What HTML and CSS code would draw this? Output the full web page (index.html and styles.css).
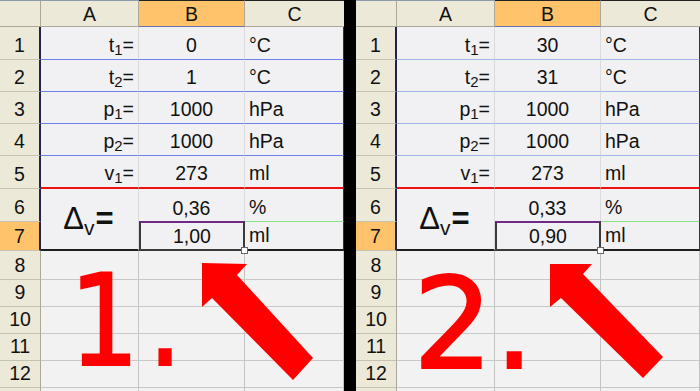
FILE: index.html
```html
<!DOCTYPE html>
<html>
<head>
<meta charset="utf-8">
<link rel="stylesheet" href="styles.css">
</head>
<body>
<div class="page">
  <div class="sheet s1">
    <div class="corner"></div><div class="ch">A</div><div class="ch sel">B</div><div class="ch last">C</div>

    <div class="rh top">1</div><div class="a blue"><span>t<sub>1</sub>=</span></div><div class="b blue">0</div><div class="c blue">°C</div>
    <div class="rh top">2</div><div class="a blue"><span>t<sub>2</sub>=</span></div><div class="b blue">1</div><div class="c blue">°C</div>
    <div class="rh top">3</div><div class="a blue"><span>p<sub>1</sub>=</span></div><div class="b blue">1000</div><div class="c blue">hPa</div>
    <div class="rh top">4</div><div class="a blue"><span>p<sub>2</sub>=</span></div><div class="b blue">1000</div><div class="c blue">hPa</div>
    <div class="rh top">5</div><div class="a red"><span>v<sub>1</sub>=</span></div><div class="b red">273</div><div class="c red">ml</div>
    <div class="rh top">6</div><div class="delta"><span>Δ<sub>v</sub><b>=</b></span></div><div class="b r6">0,36</div><div class="c green">%</div>
    <div class="rh top sel">7</div><div class="box">1,00<span class="handle"></span></div><div class="c r7">ml</div>

    <div class="rh">8</div><div class="e"></div><div class="e"></div><div class="e"></div>
    <div class="rh">9</div><div class="e"></div><div class="e"></div><div class="e"></div>
    <div class="rh">10</div><div class="e"></div><div class="e"></div><div class="e"></div>
    <div class="rh">11</div><div class="e"></div><div class="e"></div><div class="e"></div>
    <div class="rh">12</div><div class="e"></div><div class="e"></div><div class="e"></div>
    <div class="rh"></div><div class="e"></div><div class="e"></div><div class="e"></div>
  </div>

  <div class="sheet s2">
    <div class="corner"></div><div class="ch">A</div><div class="ch sel">B</div><div class="ch last">C</div>

    <div class="rh top">1</div><div class="a blue"><span>t<sub>1</sub>=</span></div><div class="b blue">30</div><div class="c blue">°C</div>
    <div class="rh top">2</div><div class="a blue"><span>t<sub>2</sub>=</span></div><div class="b blue">31</div><div class="c blue">°C</div>
    <div class="rh top">3</div><div class="a blue"><span>p<sub>1</sub>=</span></div><div class="b blue">1000</div><div class="c blue">hPa</div>
    <div class="rh top">4</div><div class="a blue"><span>p<sub>2</sub>=</span></div><div class="b blue">1000</div><div class="c blue">hPa</div>
    <div class="rh top">5</div><div class="a red"><span>v<sub>1</sub>=</span></div><div class="b red">273</div><div class="c red">ml</div>
    <div class="rh top">6</div><div class="delta"><span>Δ<sub>v</sub><b>=</b></span></div><div class="b r6">0,33</div><div class="c green">%</div>
    <div class="rh top sel">7</div><div class="box">0,90<span class="handle"></span></div><div class="c r7">ml</div>

    <div class="rh">8</div><div class="e"></div><div class="e"></div><div class="e"></div>
    <div class="rh">9</div><div class="e"></div><div class="e"></div><div class="e"></div>
    <div class="rh">10</div><div class="e"></div><div class="e"></div><div class="e"></div>
    <div class="rh">11</div><div class="e"></div><div class="e"></div><div class="e"></div>
    <div class="rh">12</div><div class="e"></div><div class="e"></div><div class="e"></div>
    <div class="rh"></div><div class="e"></div><div class="e"></div><div class="e"></div>
  </div>

  <div class="big big1">1.</div>
  <div class="big big2">2.</div>
  <svg class="arrows" width="700" height="391" viewBox="0 0 700 391">
    <polygon fill="#fe0000" points="202,263 247,264 237,275 313,358 293,380 212,298 202,307"/>
    <polygon fill="#fe0000" points="550,264 592,264 583,274 663,357 643,378 561,298 550,307"/>
  </svg>
</div>
</body>
</html>
```

FILE: styles.css
```css
html, body {
  margin: 0;
  padding: 0;
}
body {
  width: 700px;
  height: 391px;
  overflow: hidden;
  background: #000;
  font-family: "Liberation Sans", Arial, sans-serif;
  font-size: 19.5px;
  color: #111;
}
.page {
  position: relative;
  width: 700px;
  height: 391px;
  display: flex;
  gap: 12px;
  overflow: hidden;
}
.sheet {
  width: 344px;
  height: 391px;
  overflow: hidden;
  display: grid;
  grid-template-columns: 41px 98px 106px 99px;
  grid-template-rows: 27px 33px 32px 32px 32px 33px 33px 29px 29px 27px 27px 27px 27px 27px;
  background: #f2f2f2;
  --blue: #6f83e6;
}
.s2 {
  --blue: #9fb3ee;
}
.sheet > div {
  box-sizing: border-box;
  display: flex;
  align-items: flex-end;
  line-height: 1;
  padding-bottom: 4px;
  white-space: nowrap;
}
sub {
  font-size: 15px;
  vertical-align: -3px;
  line-height: 0;
}
.corner, .ch {
  background: #ece9d8;
  border-top: 1px solid #8d99ad;
  border-right: 1px solid #aca899;
  border-bottom: 1px solid #aca899;
  justify-content: center;
  padding-bottom: 2px !important;
}
.ch.sel {
  background: #ffc46b;
  border-top-color: #222;
  border-bottom-color: #6b6fb0;
}
.ch.last {
  border-top-color: #222;
  border-right: none;
}
.rh {
  background: #ece9d8;
  border-right: 1px solid #aca899;
  border-bottom: 1px solid #c5c2b2;
  justify-content: center;
}
.rh.top {
  border-right: 2px solid #24244a;
}
.rh.sel {
  background: #ffc46b;
}
.a, .b, .c, .delta, .box {
  background: #f1f1f3;
}
.a {
  justify-content: flex-end;
  padding-right: 4px;
  border-right: 1px solid #dadada;
}
.b {
  justify-content: center;
  border-right: 1px solid #dadada;
}
.c {
  padding-left: 4px;
  border-right: 1px solid #333;
}
.blue {
  border-bottom: 1px solid var(--blue);
}
.red {
  border-bottom: 2px solid #ee1111;
}
.green {
  border-bottom: 1px solid #86e486;
}
.r7 {
  border-bottom: 2px solid #1e1e1e;
}
.delta {
  grid-row: span 2;
  justify-content: center;
  align-items: center !important;
  padding-bottom: 2px !important;
  padding-right: 2px;
  font-size: 31px;
  border-right: 1px solid #dadada;
  border-bottom: 2px solid #1e1e1e;
}
.delta sub {
  font-size: 21px;
  vertical-align: -6px;
}
.delta b {
  font-weight: bold;
  margin-left: 1px;
}
.box {
  position: relative;
  justify-content: center;
  border: 2px solid #3a3a3a;
  border-top-color: #6e2a86;
  margin-top: -1px;
  padding-bottom: 3px !important;
}
.handle {
  position: absolute;
  right: -5px;
  bottom: -5px;
  width: 5px;
  height: 5px;
  background: #fff;
  border: 1px solid #666;
}
.e {
  border-right: 1px solid #c4c4c4;
  border-bottom: 1px solid #c8c8c8;
}
.big {
  position: absolute;
  font-family: "DejaVu Sans", sans-serif;
  font-size: 126px;
  line-height: 1;
  color: #fe0000;
  -webkit-text-stroke: 2px #fe0000;
  transform-origin: 0 0;
}
.big1 {
  left: 69px;
  top: 259px;
  letter-spacing: 9px;
  transform: scaleX(0.88);
}
.big2 {
  left: 413px;
  top: 262px;
  letter-spacing: 1px;
}
.arrows {
  position: absolute;
  left: 0;
  top: 0;
}
```
